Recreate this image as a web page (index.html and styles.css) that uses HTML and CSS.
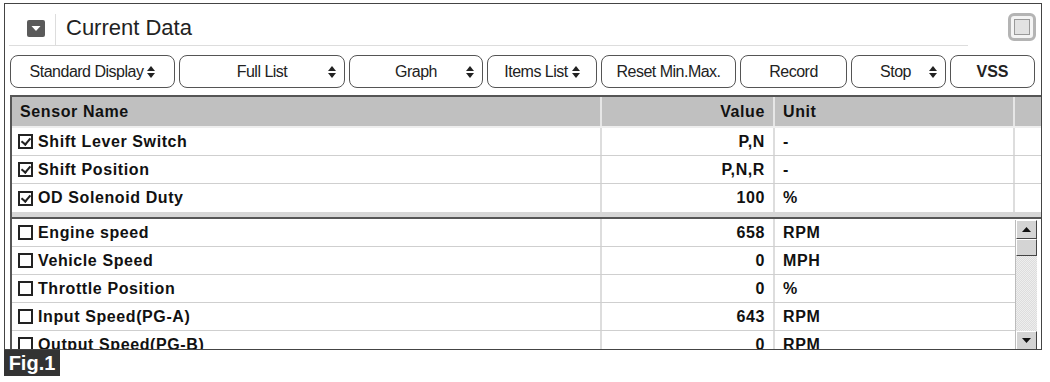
FILE: index.html
```html
<!DOCTYPE html>
<html lang="en">
<head>
    <meta charset="UTF-8">
    <title>Current Data</title>
    <link rel="stylesheet" href="styles.css">
</head>
<body>
    <div class="frame">
        <div class="title-bar">
            <div class="title-main">
                <span class="collapse-icon">
                    <svg width="18" height="17" viewBox="0 0 18 17"><rect x="0" y="0" width="18" height="17" rx="2" fill="#5a5a5a"/><path d="M4.5 6 L13.5 6 L9 11 Z" fill="#fff"/></svg>
                </span>
                <span class="title-text">Current Data</span>
            </div>
            <span class="max-box"><span></span></span>
        </div>

        <div class="toolbar">
            <button class="tb w-std">Standard Display <i class="spin"></i></button>
            <button class="tb w-full"><span class="grow">Full List</span><i class="spin"></i></button>
            <button class="tb w-graph"><span class="grow">Graph</span><i class="spin"></i></button>
            <button class="tb w-items">Items List <i class="spin"></i></button>
            <button class="tb w-reset">Reset Min.Max.</button>
            <button class="tb w-record">Record</button>
            <button class="tb w-stop"><span class="grow">Stop</span><i class="spin"></i></button>
            <button class="tb w-vss">VSS</button>
        </div>

        <div class="grid-table">
            <div class="row head">
                <div class="cell name">Sensor Name</div>
                <div class="cell value">Value</div>
                <div class="cell unit">Unit</div>
                <div class="cell extra"></div>
            </div>
            <div class="row">
                <div class="cell name"><span class="chk on"></span>Shift Lever Switch</div>
                <div class="cell value">P,N</div>
                <div class="cell unit">-</div>
                <div class="cell extra"></div>
            </div>
            <div class="row">
                <div class="cell name"><span class="chk on"></span>Shift Position</div>
                <div class="cell value">P,N,R</div>
                <div class="cell unit">-</div>
                <div class="cell extra"></div>
            </div>
            <div class="row last">
                <div class="cell name"><span class="chk on"></span>OD Solenoid Duty</div>
                <div class="cell value">100</div>
                <div class="cell unit">%</div>
                <div class="cell extra"></div>
            </div>

            <div class="lower">
                <div class="lower-rows">
                    <div class="row">
                        <div class="cell name"><span class="chk"></span>Engine speed</div>
                        <div class="cell value">658</div>
                        <div class="cell unit">RPM</div>
                    </div>
                    <div class="row">
                        <div class="cell name"><span class="chk"></span>Vehicle Speed</div>
                        <div class="cell value">0</div>
                        <div class="cell unit">MPH</div>
                    </div>
                    <div class="row">
                        <div class="cell name"><span class="chk"></span>Throttle Position</div>
                        <div class="cell value">0</div>
                        <div class="cell unit">%</div>
                    </div>
                    <div class="row">
                        <div class="cell name"><span class="chk"></span>Input Speed(PG-A)</div>
                        <div class="cell value">643</div>
                        <div class="cell unit">RPM</div>
                    </div>
                    <div class="row">
                        <div class="cell name"><span class="chk"></span>Output Speed(PG-B)</div>
                        <div class="cell value">0</div>
                        <div class="cell unit">RPM</div>
                    </div>
                </div>
                <div class="scrollbar">
                    <div class="sb-btn"><svg width="9" height="5" viewBox="0 0 9 5"><path d="M0 5 L4.5 0 L9 5 Z" fill="#111"/></svg></div>
                    <div class="sb-thumb"></div>
                    <div class="sb-track"></div>
                    <div class="sb-btn"><svg width="9" height="5" viewBox="0 0 9 5"><path d="M0 0 L9 0 L4.5 5 Z" fill="#111"/></svg></div>
                </div>
            </div>
        </div>
    </div>
    <div class="fig-label">Fig.1</div>
</body>
</html>
```

FILE: styles.css
```css
body {
    margin: 0;
    padding: 0;
    background: #fff;
    font-family: "Liberation Sans", Arial, sans-serif;
    color: #111;
}

.frame {
    margin: 3px 0 0 4px;
    width: 1036px;
    height: 345px;
    border: 1px solid #444;
    overflow: hidden;
}

/* title */
.title-bar {
    display: flex;
    align-items: center;
    height: 42px;
    margin-left: 4px;
}

.title-main {
    display: flex;
    align-items: stretch;
    flex-grow: 1;
    height: 42px;
    border-bottom: 1px solid #ddd;
    margin-right: 40px;
    box-sizing: border-box;
}

.collapse-icon {
    display: flex;
    align-items: center;
    margin-left: 18px;
    padding: 6px 10px 0 0;
    margin-top: 10px;
    border-right: 1px solid #ddd;
}

.collapse-icon svg {
    margin-top: -8px;
}

.title-text {
    display: flex;
    align-items: center;
    margin-left: 10px;
    padding-top: 6px;
    font-size: 22px;
    color: #222;
}

.max-box {
    width: 28px;
    height: 28px;
    border: 3px solid #b4b4b4;
    border-radius: 6px;
    box-sizing: border-box;
    display: flex;
    align-items: center;
    justify-content: center;
    background: #f4f4f4;
    margin: 4px 5px 0 0;
}

.max-box span {
    width: 14px;
    height: 14px;
    border: 1px solid #999;
    background: #e2e2e2;
}

/* toolbar */
.toolbar {
    display: flex;
    gap: 4px;
    padding: 9px 0 0 5px;
    height: 33px;
}

.tb {
    height: 33px;
    border: 1.5px solid #555;
    border-radius: 8px;
    background: #fff;
    font-family: "Liberation Sans", Arial, sans-serif;
    font-size: 16px;
    color: #222;
    display: flex;
    align-items: center;
    justify-content: center;
    padding: 0 8px;
    letter-spacing: -0.5px;
}

.tb .grow {
    flex-grow: 1;
    text-align: center;
}

.spin {
    display: inline-block;
    width: 8px;
    height: 12px;
    margin-left: 4px;
    position: relative;
}

.spin::before,
.spin::after {
    content: "";
    position: absolute;
    left: 0;
    border-left: 4px solid transparent;
    border-right: 4px solid transparent;
}

.spin::before {
    top: 0;
    border-bottom: 5px solid #222;
}

.spin::after {
    bottom: 0;
    border-top: 5px solid #222;
}

.w-std { width: 165px; }
.w-full { width: 166px; padding-left: 20px; }
.w-graph { width: 134px; padding-left: 20px; }
.w-items { width: 110px; }
.w-reset { width: 135px; }
.w-record { width: 107px; }
.w-stop { width: 95px; padding-left: 14px; }
.w-vss { width: 85px; font-weight: bold; letter-spacing: 0; }

/* table */
.grid-table {
    margin: 7px 0 0 5px;
    width: 1029px;
    border-left: 2px solid #555;
    border-top: 2px solid #555;
    font-size: 16px;
    font-weight: bold;
    letter-spacing: 0.6px;
}

.row {
    display: grid;
    grid-template-columns: 590px 173px 240px 1fr;
    height: 28px;
    border-bottom: 1px solid #cfcfcf;
    box-sizing: border-box;
}

.cell {
    display: flex;
    align-items: center;
    border-right: 2px solid #ddd;
    padding: 0 8px;
    white-space: nowrap;
    overflow: hidden;
}

.cell.name {
    padding-left: 6px;
}

.cell.value {
    justify-content: flex-end;
}

.cell.extra {
    border-right: none;
}

.row.head {
    height: 31px;
    background: #c0c0c0;
    border-bottom: 2px solid #eee;
}

.row.head .cell {
    border-right: 2px solid #e6e6e6;
}

.row.head .cell.name {
    padding-left: 8px;
}

.row.head .cell.extra {
    border-right: none;
}

.row.last {
    border-bottom: 5px solid #d6d6d6;
    height: 33px;
}

.chk {
    display: inline-block;
    width: 15px;
    height: 15px;
    border: 2px solid #222;
    box-sizing: border-box;
    margin-right: 5px;
    position: relative;
}

.chk.on::after {
    content: "";
    position: absolute;
    left: 3px;
    top: 0;
    width: 4px;
    height: 7px;
    border-right: 2px solid #222;
    border-bottom: 2px solid #222;
    transform: rotate(40deg);
}

.lower {
    display: flex;
    border-top: 2px solid #555;
}

.lower-rows {
    width: 1003px;
}

.lower-rows .row {
    grid-template-columns: 590px 173px 240px;
    height: 28px;
}

.lower-rows .cell.unit {
    border-right: none;
}

.scrollbar {
    width: 21px;
    display: flex;
    flex-direction: column;
    border-left: 1px solid #bbb;
    margin-top: 1px;
    height: 130px;
}

.sb-btn,
.sb-thumb {
    height: 19px;
    background: #d4d4d4;
    border: 1px solid #fff;
    border-right-color: #444;
    border-bottom-color: #444;
    box-sizing: border-box;
    display: flex;
    align-items: center;
    justify-content: center;
}

.sb-thumb {
    height: 17px;
}

.sb-track {
    flex-grow: 1;
    background: repeating-conic-gradient(#ddd 0 25%, #eee 0 50%) 0 0 / 2px 2px;
}

.fig-label {
    margin-left: 4px;
    width: 56px;
    height: 26px;
    background: #333;
    color: #fff;
    font-weight: bold;
    font-size: 20px;
    display: flex;
    align-items: center;
    justify-content: center;
}
```
